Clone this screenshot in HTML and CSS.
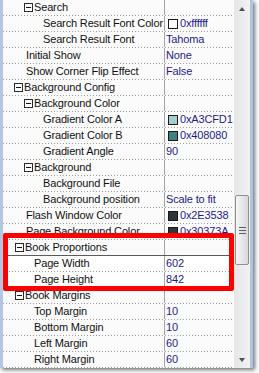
FILE: index.html
```html
<!DOCTYPE html>
<html lang="en">
<head>
  <meta charset="UTF-8" />
  <title>Property Grid</title>
  <link rel="stylesheet" href="styles.css">
</head>
<body>
  <div class="frame">
    <div class="grid">
      <div class="row"><div class="name cat1"><span class="box"></span>Search</div><div class="val"></div></div>
      <div class="row"><div class="name lv2">Search Result Font Color</div><div class="val"><span class="sw sw-white"></span>0xffffff</div></div>
      <div class="row"><div class="name lv2">Search Result Font</div><div class="val">Tahoma</div></div>
      <div class="row"><div class="name lv1">Initial Show</div><div class="val">None</div></div>
      <div class="row"><div class="name lv1">Show Corner Flip Effect</div><div class="val">False</div></div>
      <div class="row"><div class="name cat0"><span class="box"></span>Background Config</div><div class="val"></div></div>
      <div class="row"><div class="name cat1"><span class="box"></span>Background Color</div><div class="val"></div></div>
      <div class="row"><div class="name lv2">Gradient Color A</div><div class="val"><span class="sw sw-a"></span>0xA3CFD1</div></div>
      <div class="row"><div class="name lv2">Gradient Color B</div><div class="val"><span class="sw sw-b"></span>0x408080</div></div>
      <div class="row"><div class="name lv2">Gradient Angle</div><div class="val">90</div></div>
      <div class="row"><div class="name cat1"><span class="box"></span>Background</div><div class="val"></div></div>
      <div class="row"><div class="name lv2">Background File</div><div class="val"></div></div>
      <div class="row"><div class="name lv2">Background position</div><div class="val">Scale to fit</div></div>
      <div class="row"><div class="name lv1">Flash Window Color</div><div class="val"><span class="sw sw-flash"></span>0x2E3538</div></div>
      <div class="row"><div class="name lv1">Page Background Color</div><div class="val"><span class="sw sw-page"></span>0x30373A</div></div>
      <div class="row row-solid"><div class="name cat0b"><span class="box"></span>Book Proportions</div><div class="val"></div></div>
      <div class="row row-white"><div class="name lv1b">Page Width</div><div class="val">602</div></div>
      <div class="row row-white"><div class="name lv1b">Page Height</div><div class="val">842</div></div>
      <div class="row"><div class="name cat0b"><span class="box"></span>Book Margins</div><div class="val"></div></div>
      <div class="row"><div class="name lv1b">Top Margin</div><div class="val">10</div></div>
      <div class="row"><div class="name lv1b">Bottom Margin</div><div class="val">10</div></div>
      <div class="row"><div class="name lv1b">Left Margin</div><div class="val">60</div></div>
      <div class="row"><div class="name lv1b">Right Margin</div><div class="val">60</div></div>

      <div class="mark"></div>
    </div>

    <div class="scroll">
      <div class="arrow"><span class="tri-up"></span></div>
      <div class="thumb">
        <span class="grip"></span>
        <span class="grip"></span>
        <span class="grip"></span>
      </div>
      <div class="track"></div>
      <div class="arrow"><span class="tri-down"></span></div>
    </div>
  </div>
</body>
</html>
```

FILE: styles.css
```css
html, body {
  margin: 0;
  padding: 0;
  background: #ffffff;
}

body {
  width: 259px;
  height: 373px;
  overflow: hidden;
  font-family: 'Liberation Sans', Arial, sans-serif;
  font-size: 11px;
  letter-spacing: -0.15px;
  color: #111;
}

.frame {
  display: flex;
  width: 253px;
  height: 368px;
  box-sizing: border-box;
  border-left: 3px solid #b3c8e0;
  border-right: 3px solid #a9c6e8;
  box-shadow: 2px 2px 4px rgba(0,0,0,0.55);
  background: #fbfbfb;
}

.grid {
  position: relative;
  width: 231px;
}

.row {
  display: flex;
  height: 16px;
  box-sizing: border-box;
  padding-bottom: 1px;
  background: linear-gradient(to right, #9c9c9c 1px, transparent 1px) left bottom / 3px 1px repeat-x;
}

.row-solid {
  background: linear-gradient(#5a5a5a, #5a5a5a) left bottom / 100% 1px no-repeat;
}

.row-white {
  background-color: #ffffff;
}

.name {
  display: flex;
  align-items: center;
  width: 162px;
  box-sizing: border-box;
  border-right: 1px solid #a4a4a4;
  white-space: nowrap;
  overflow: hidden;
  line-height: 15px;
}

.val {
  display: flex;
  align-items: center;
  flex: 1;
  padding-left: 1px;
  line-height: 15px;
  color: #1c1c8c;
  white-space: nowrap;
  overflow: hidden;
}

/* indent levels */
.cat0 { padding-left: 11px; }
.cat0b { padding-left: 12px; }
.cat1 { padding-left: 21px; }
.lv1 { padding-left: 23px; }
.lv1b { padding-left: 31px; }
.lv2 { padding-left: 40px; }

.box {
  position: relative;
  width: 9px;
  height: 9px;
  box-sizing: border-box;
  border: 1px solid #2a2a2a;
  background: #fff;
  margin-right: 1px;
  flex: none;
}

.box::after {
  content: '';
  position: absolute;
  left: 1px;
  top: 3px;
  width: 5px;
  height: 1px;
  background: #111;
}

.sw {
  width: 10px;
  height: 10px;
  box-sizing: border-box;
  border: 1px solid #1a1a1a;
  margin: 0 2px 0 2px;
  flex: none;
}

.sw-white { background: #ffffff; }
.sw-a { background: #a3cfd1; }
.sw-b { background: #408080; }
.sw-flash { background: #2e3538; }
.sw-page { background: #30373a; }

.mark {
  position: absolute;
  left: 0;
  top: 233px;
  width: 231px;
  height: 58px;
  box-sizing: border-box;
  border: 5px solid #ff0000;
  border-radius: 2px;
}

.scroll {
  display: flex;
  flex-direction: column;
  width: 16px;
  background: linear-gradient(to right, #e6e6e6, #f2f2f2);
}

.arrow {
  height: 17px;
  display: flex;
  align-items: center;
  justify-content: center;
}

.tri-up {
  width: 0;
  height: 0;
  border-left: 3.5px solid transparent;
  border-right: 3.5px solid transparent;
  border-bottom: 4px solid #505050;
}

.tri-down {
  width: 0;
  height: 0;
  border-left: 3.5px solid transparent;
  border-right: 3.5px solid transparent;
  border-top: 4px solid #505050;
}

.thumb {
  margin: 178px 1px 0 1px;
  height: 70px;
  box-sizing: border-box;
  border: 1px solid #8e8f8f;
  border-radius: 2px;
  background: linear-gradient(to right, #f6f6f6, #e4e4e4 60%, #d8d8d8);
  display: flex;
  flex-direction: column;
  align-items: center;
  justify-content: center;
  gap: 2px;
}

.grip {
  width: 7px;
  height: 1px;
  background: #5c5c5c;
}

.track {
  flex: 1;
}
```
